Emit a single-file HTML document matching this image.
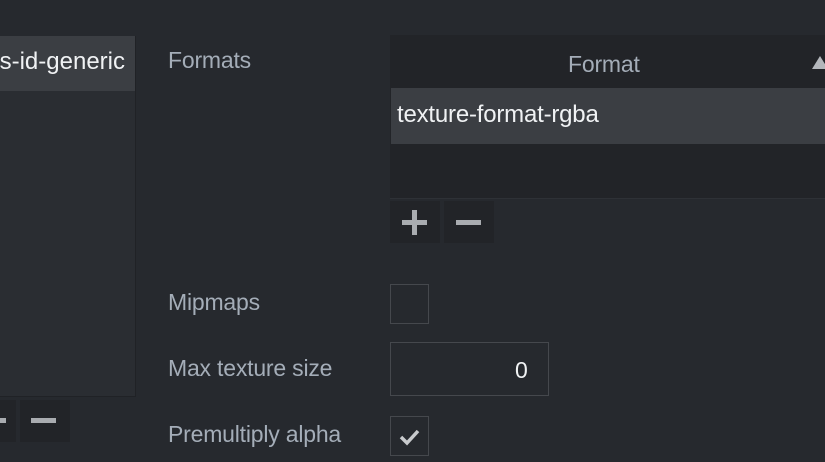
<!DOCTYPE html>
<html><head><style>
*{margin:0;padding:0;box-sizing:border-box}
body{width:825px;height:462px;background:#26292e;font-family:"Liberation Sans",sans-serif;overflow:hidden;position:relative}
.a{position:absolute}
.lbl{color:#a4adb8;font-size:23px;letter-spacing:-0.2px}
.btn{background:#222428;}
.bar{position:absolute;background:#a9acb0}
</style></head><body>
<div class="a" style="left:0;top:36px;width:136px;height:361px;background:#2a2d32;border-right:1px solid #202226;border-bottom:1px solid #202226"></div>
<div class="a" style="left:0;top:36px;width:135px;height:55px;background:#3b3e43"></div>
<div class="a" style="right:700px;top:48px;color:#f0f2f4;font-size:24px;white-space:nowrap">s-id-generic</div>
<div class="a btn" style="left:-30px;top:400px;width:46px;height:42px"></div>
<div class="a btn" style="left:20px;top:400px;width:50px;height:42px"></div>
<div class="bar" style="left:0;top:418px;width:6px;height:5px"></div>
<div class="bar" style="left:31px;top:418px;width:25px;height:5px"></div>

<div class="a lbl" style="left:168px;top:47px">Formats</div>
<div class="a" style="left:390px;top:35px;width:435px;height:164px;background:#222428;border-bottom:1px solid #2e3136"></div>
<div class="a lbl" style="left:568px;top:51px;font-size:23px">Format</div>
<div class="a" style="left:812px;top:56px;width:0;height:0;border-left:8px solid transparent;border-right:8px solid transparent;border-bottom:13px solid #b4b7bb"></div>
<div class="a" style="left:391px;top:88px;width:434px;height:56px;background:#3b3e43"></div>
<div class="a" style="left:397px;top:101px;color:#f0f2f4;font-size:24px;letter-spacing:-0.2px">texture-format-rgba</div>
<div class="a btn" style="left:390px;top:201px;width:50px;height:42px"></div>
<div class="a btn" style="left:444px;top:201px;width:50px;height:42px"></div>
<div class="bar" style="left:402px;top:220px;width:25px;height:5px"></div>
<div class="bar" style="left:412px;top:210px;width:5px;height:25px"></div>
<div class="bar" style="left:456px;top:220px;width:25px;height:5px"></div>

<div class="a lbl" style="left:168px;top:289px">Mipmaps</div>
<div class="a" style="left:390px;top:284px;width:39px;height:40px;border:1px solid #45484d"></div>
<div class="a lbl" style="left:168px;top:355px">Max texture size</div>
<div class="a" style="left:390px;top:342px;width:159px;height:54px;border:1px solid #45484d"></div>
<div class="a" style="left:515px;top:357px;color:#f0f2f4;font-size:23px">0</div>
<div class="a lbl" style="left:168px;top:421px">Premultiply alpha</div>
<div class="a" style="left:390px;top:416px;width:39px;height:40px;border:1px solid #45484d"></div>
<svg class="a" style="left:398px;top:426px" width="24" height="22" viewBox="0 0 24 22"><path d="M3 11 L9 17 L20 5" stroke="#c8cacd" stroke-width="3.5" fill="none"/></svg>
</body></html>
